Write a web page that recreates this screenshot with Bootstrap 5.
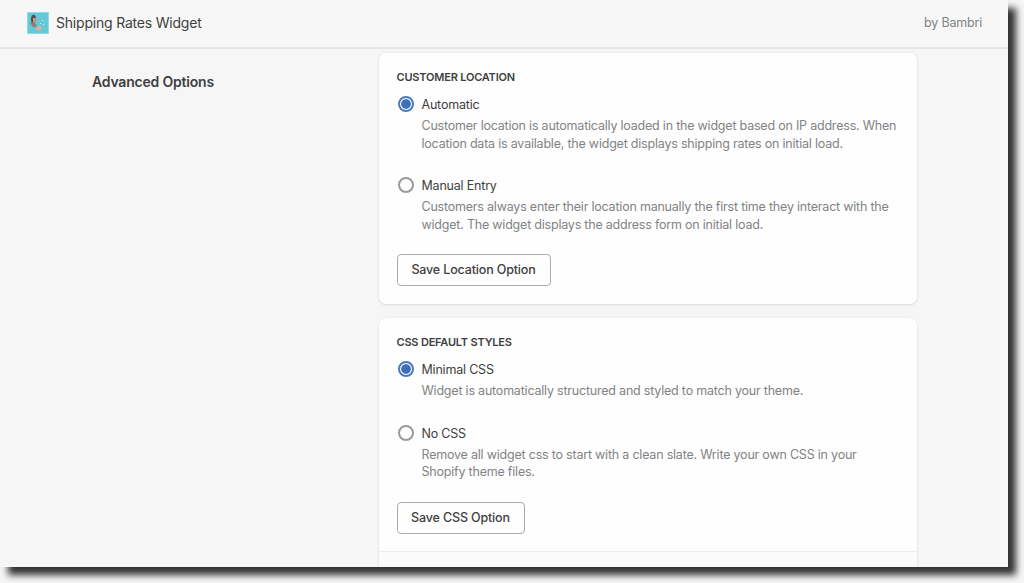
<!DOCTYPE html>
<html lang="en">
<head>
<meta charset="utf-8">
<meta name="viewport" content="width=device-width, initial-scale=1">
<title>Shipping Rates Widget</title>
<link href="https://cdn.jsdelivr.net/npm/bootstrap@5.3.0/dist/css/bootstrap.min.css" rel="stylesheet">
<style>
body{background:#f6f6f6;font-family:Inter,sans-serif;font-size:13px;letter-spacing:-.2px;color:#3e3f41;min-height:583px}
.app-window{width:1008px;height:567px;background:#f6f6f6;box-shadow:8px 8px 7px 0 #333}
.app-bar{height:49px;background:#f6f7f6;border-bottom:2px solid #e4e5e5;padding:0 26px 2px 27px}
.app-name{font-size:14px;line-height:20px;margin-left:7px;padding-top:1px}
.app-by{font-size:12.5px;color:#828384;padding-top:2px}
.page-body{height:518px}
.side{width:379px;padding:23px 0 0 92px}
.side h1{font-size:14px;line-height:20px;font-weight:600;margin:0}
.main{width:538px;padding-top:4px}
.panel{background:#fefefe;border-radius:7px;box-shadow:0 0 3px rgba(23,24,24,.07),0 1px 2px rgba(0,0,0,.08);padding:16px 18px 0 17.5px}
.panel-a{height:251px}
.panel-b{height:300px;margin-top:14px}
.panel h2{font-size:11px;line-height:16px;font-weight:600;margin:0 0 11px}
.choice{display:grid;grid-template-columns:25px 1fr;line-height:18px;margin-bottom:25px}
.choice .form-check-input{width:16px;height:16px;margin:0 0 0 1px;border:2px solid #999a9b;background:#fefefe;box-shadow:none}
.choice .form-check-input:checked{border-color:#4a7bc0;background:radial-gradient(circle,#3f6fba 0 4.4px,#fefefe 5.2px)}
.choice label{font-size:12.5px}
.choice p{grid-column:2;font-size:12.5px;line-height:17.7px;letter-spacing:-.21px;color:#828384;margin:3px 0 0;white-space:nowrap}
.choice-last{margin-bottom:20.6px}
.btn-save{display:block;font-size:12.5px;line-height:18px;letter-spacing:-.15px;font-weight:500;height:32px;border:1px solid #a9abad;border-radius:4px;background:#fefefe;color:#3e3f41;padding:6px 0}
.next-section{height:30px;margin:17.5px -18px 0 -17.5px;border-top:1px solid #ececec;background:#fbfbfb}
</style>
</head>
<body>
<div class="app-window">
  <header class="app-bar d-flex align-items-center">
    <svg width="22" height="22" viewBox="0 0 22 22" aria-hidden="true">
      <rect width="22" height="22" fill="#64c8d8"/>
      <rect x=".5" y=".5" width="21" height="21" fill="none" stroke="#c5edf2" stroke-dasharray="1 1"/>
      <path d="M4 7Q4 3 7 2.5L9 5 9 9 6 11 4 9Z" fill="#594a53"/>
      <path d="M6 6L10 6 9.5 9.5 6 10Z" fill="#c39889"/>
      <path d="M3 10L7 10 9.5 13 9 16 5 14Z" fill="#8b747a"/>
      <path d="M8 16L11 14 14 14 15 17 13 19 10 18Z" fill="#d4b3a9"/>
      <path d="M5 12L9 14 9 16.5Z" fill="#b48479"/>
      <path d="M15 8h1v1h-1zM13 11h1v1h-1zM16 12h1v1h-1z" fill="#d9fbfb"/>
    </svg>
    <span class="app-name">Shipping Rates Widget</span>
    <span class="app-by ms-auto">by Bambri</span>
  </header>
  <div class="page-body d-flex overflow-hidden">
    <aside class="side flex-shrink-0"><h1>Advanced Options</h1></aside>
    <main class="main flex-shrink-0">
      <section class="panel panel-a">
        <h2>CUSTOMER LOCATION</h2>
        <div class="choice">
          <input class="form-check-input" type="radio" name="loc" id="auto" checked>
          <label for="auto">Automatic</label>
          <p>Customer location is automatically loaded in the widget based on IP address. When<br>location data is available, the widget displays shipping rates on initial load.</p>
        </div>
        <div class="choice choice-last">
          <input class="form-check-input" type="radio" name="loc" id="manual">
          <label for="manual">Manual Entry</label>
          <p>Customers always enter their location manually the first time they interact with the<br>widget. The widget displays the address form on initial load.</p>
        </div>
        <button class="btn btn-save" type="button" style="width:154px">Save Location Option</button>
      </section>
      <section class="panel panel-b">
        <h2>CSS DEFAULT STYLES</h2>
        <div class="choice">
          <input class="form-check-input" type="radio" name="css" id="minimal" checked>
          <label for="minimal">Minimal CSS</label>
          <p>Widget is automatically structured and styled to match your theme.</p>
        </div>
        <div class="choice choice-last">
          <input class="form-check-input" type="radio" name="css" id="none">
          <label for="none">No CSS</label>
          <p>Remove all widget css to start with a clean slate. Write your own CSS in your<br>Shopify theme files.</p>
        </div>
        <button class="btn btn-save" type="button" style="width:128px">Save CSS Option</button>
        <div class="next-section"></div>
      </section>
    </main>
  </div>
</div>
<script src="https://cdn.jsdelivr.net/npm/bootstrap@5.3.0/dist/js/bootstrap.bundle.min.js"></script>
</body>
</html>
